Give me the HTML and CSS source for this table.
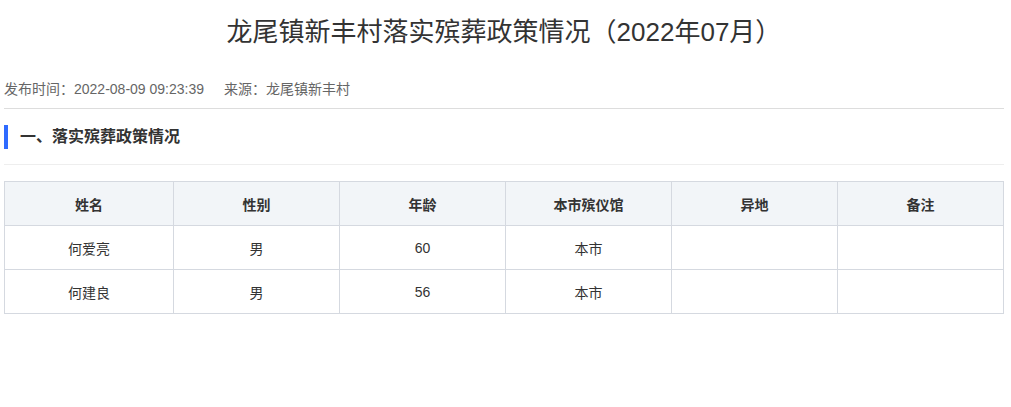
FILE: index.html
```html
<!DOCTYPE html>
<html lang="zh-CN">
<head>
<meta charset="utf-8">
<title>龙尾镇新丰村落实殡葬政策情况（2022年07月）</title>
<link rel="stylesheet" href="styles.css">
</head>
<body>
<div class="page">
  <h1 class="title">龙尾镇新丰村落实殡葬政策情况（2022年07月）</h1>
  <div class="meta">
    <span class="meta-item">发布时间：2022-08-09 09:23:39</span>
    <span class="meta-item">来源：龙尾镇新丰村</span>
  </div>
  <div class="section">
    <h2 class="section-title">一、落实殡葬政策情况</h2>
  </div>
  <table class="data-table">
    <thead>
      <tr>
        <th class="col-first">姓名</th>
        <th>性别</th>
        <th>年龄</th>
        <th>本市殡仪馆</th>
        <th>异地</th>
        <th>备注</th>
      </tr>
    </thead>
    <tbody>
      <tr>
        <td>何爱亮</td>
        <td>男</td>
        <td>60</td>
        <td>本市</td>
        <td></td>
        <td></td>
      </tr>
      <tr>
        <td>何建良</td>
        <td>男</td>
        <td>56</td>
        <td>本市</td>
        <td></td>
        <td></td>
      </tr>
    </tbody>
  </table>
</div>
</body>
</html>
```

FILE: styles.css
```css
html, body {
  margin: 0;
  padding: 0;
  background: #fff;
}
body {
  font-family: "Liberation Sans", "Noto Sans CJK SC", sans-serif;
  color: #333;
}
.page {
  width: 1000px;
  padding: 0 4px;
}
.title {
  margin: 0;
  padding-top: 14px;
  height: 36px;
  line-height: 36px;
  font-size: 26px;
  font-weight: normal;
  text-align: center;
  color: #333;
}
.meta {
  margin-top: 28px;
  height: 22px;
  line-height: 22px;
  font-size: 14px;
  color: #666;
  padding-bottom: 8px;
  border-bottom: 1px solid #ddd;
  display: flex;
  gap: 20px;
}
.section {
  padding: 16px 0 15px;
  border-bottom: 1px solid #eee;
}
.section-title {
  margin: 0;
  height: 24px;
  line-height: 24px;
  font-size: 16px;
  font-weight: bold;
  color: #333;
  border-left: 4px solid #2f6bff;
  padding-left: 12px;
}
.data-table {
  margin-top: 16px;
  width: 1000px;
  border-collapse: collapse;
  table-layout: fixed;
  font-size: 14px;
  color: #333;
}
.data-table th,
.data-table td {
  border: 1px solid #d5d9e0;
  height: 43px;
  padding: 0;
  text-align: center;
  vertical-align: middle;
}
.data-table th {
  background: #f2f5f8;
  font-weight: bold;
}
.data-table .col-first {
  width: 168px;
}
```
